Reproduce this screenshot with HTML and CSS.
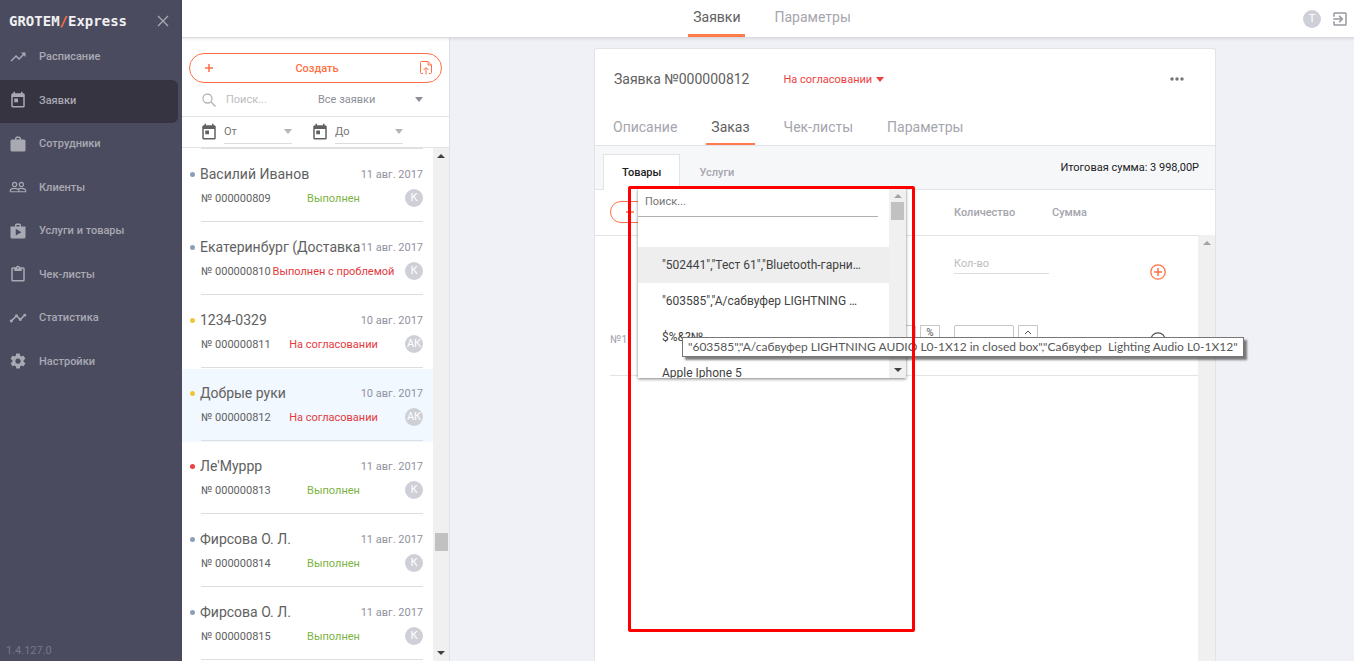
FILE: index.html
```html
<!DOCTYPE html>
<html lang="ru">
<head>
    <meta charset="UTF-8">
    <meta name="viewport" content="width=device-width, initial-scale=1.0">
    <title>GROTEM/Express</title>
    <link rel="stylesheet" href="styles.css">
</head>
<body>

    <aside class="sidebar">
        <div class="brand">
            <a href="#" class="logo">GROTEM<span>/</span>Express</a>
            <button class="close" aria-label="Закрыть меню">
                <svg width="12" height="12" viewBox="0 0 12 12"><path d="M1 1l10 10M11 1L1 11" stroke="currentColor" stroke-width="1.3"/></svg>
            </button>
        </div>
        <nav class="menu">
            <a href="#">
                <svg class="icon" viewBox="0 0 24 24"><path d="M16 6l2.3 2.3-4.9 4.9-4-4L2 16.600l1.400 1.400 6-6 4 4 6.300-6.300L22 12V6z"/></svg>
                Расписание
            </a>
            <a href="#" class="active">
                <svg class="icon" viewBox="0 0 24 24"><path d="M19 3h-1V1h-2v2H8V1H6v2H5a2 2 0 0 0-2 2v15c0 1.100.9 2 2 2h14a2 2 0 0 0 2-2V5a2 2 0 0 0-2-2zm0 17H5V8h14v12zM7 10h5v5H7z"/></svg>
                Заявки
            </a>
            <a href="#">
                <svg class="icon" viewBox="0 0 24 24"><path d="M20 6h-4V4l-2-2h-4L8 4v2H4a2 2 0 0 0-2 2v12c0 1.100.9 2 2 2h16a2 2 0 0 0 2-2V8a2 2 0 0 0-2-2zm-6 0h-4V4h4z"/></svg>
                Сотрудники
            </a>
            <a href="#">
                <svg class="icon" viewBox="0 0 24 24"><path d="M16.500 13c-1.200 0-3.100.3-4.500 1-1.400-.7-3.300-1-4.500-1C5.300 13 1 14.100 1 16.200V19h22v-2.800c0-2.100-4.300-3.200-6.500-3.200zm-4 4.500h-10v-1.300c0-.5 2.600-1.700 5-1.700s5 1.200 5 1.700zm9 0H14v-1.300c0-.5-.2-.9-.6-1.200.9-.3 2-.5 3.100-.5 2.400 0 5 1.200 5 1.700zM7.500 12a3.500 3.500 0 1 0 0-7 3.500 3.500 0 0 0 0 7zm0-5.500a2 2 0 1 1 0 4 2 2 0 0 1 0-4zm9 5.500a3.500 3.500 0 1 0 0-7 3.500 3.500 0 0 0 0 7zm0-5.500a2 2 0 1 1 0 4 2 2 0 0 1 0-4z"/></svg>
                Клиенты
            </a>
            <a href="#">
                <svg class="icon" viewBox="0 0 24 24"><path d="M16 6V4a2 2 0 0 0-2-2h-4a2 2 0 0 0-2 2v2H2v14c0 1.100.9 2 2 2h16a2 2 0 0 0 2-2V6zm-6-2h4v2h-4zM9 18V9l7.500 4.500z"/></svg>
                Услуги и товары
            </a>
            <a href="#">
                <svg class="icon" viewBox="0 0 24 24"><path d="M19 3h-4.200a3 3 0 0 0-5.600 0H5a2 2 0 0 0-2 2v15c0 1.100.9 2 2 2h14a2 2 0 0 0 2-2V5a2 2 0 0 0-2-2zm-7 0a1 1 0 1 1 0 2 1 1 0 0 1 0-2zm7 17H5V5h2v3h10V5h2z"/></svg>
                Чек-листы
            </a>
            <a href="#">
                <svg class="icon" viewBox="0 0 24 24"><path d="M23 8a2 2 0 0 1-2.500 1.900L17 13.500a2 2 0 1 1-3.900 0L10.500 11a2 2 0 0 1-1 0L5 15.500A2 2 0 1 1 3.500 14L8 9.500a2 2 0 1 1 3.900 0l2.600 2.600a2 2 0 0 1 1 0L19 8.500A2 2 0 1 1 23 8z"/></svg>
                Статистика
            </a>
            <a href="#">
                <svg class="icon" viewBox="0 0 24 24"><path d="M19.400 13a7.800 7.800 0 0 0 0-2l2.100-1.600c.2-.2.2-.4.100-.7l-2-3.400c-.1-.2-.4-.3-.6-.2l-2.500 1a7.300 7.300 0 0 0-1.700-1l-.4-2.600A.5.5 0 0 0 14 2h-4c-.3 0-.5.200-.5.400l-.4 2.700c-.6.200-1.200.6-1.700 1l-2.500-1c-.2-.1-.5 0-.6.200l-2 3.400c-.1.200-.1.500.1.700L4.600 11a7.800 7.800 0 0 0 0 2l-2.100 1.600c-.2.200-.2.400-.1.700l2 3.400c.1.200.4.300.6.200l2.500-1c.5.400 1.100.7 1.700 1l.4 2.700c0 .2.200.4.400.4h4c.3 0 .5-.2.500-.4l.4-2.700c.6-.2 1.200-.6 1.700-1l2.500 1c.2.100.5 0 .6-.2l2-3.400c.1-.2.100-.5-.1-.7zM12 15.500a3.500 3.500 0 1 1 0-7 3.500 3.500 0 0 1 0 7z"/></svg>
                Настройки
            </a>
        </nav>
        <div class="version">1.4.127.0</div>
    </aside>

    <div class="app">
        <header class="topbar">
            <nav class="top-tabs">
                <a href="#" class="active">Заявки</a>
                <a href="#">Параметры</a>
            </nav>
            <div class="user">
                <span class="avatar">T</span>
                <button class="logout" aria-label="Выход">
                    <svg width="18" height="18" viewBox="0 0 24 24"><path d="M10.100 15.600L11.500 17l5-5-5-5-1.400 1.400L12.700 11H3v2h9.700zM19 3H5a2 2 0 0 0-2 2v4h2V5h14v14H5v-4H3v4c0 1.100.9 2 2 2h14a2 2 0 0 0 2-2V5a2 2 0 0 0-2-2z" fill="currentColor"/></svg>
                </button>
            </div>
        </header>

        <div class="content">
            <section class="orders-panel">
                <button class="create">
                    <svg width="10" height="10" viewBox="0 0 10 10"><path d="M5 1v8M1 5h8" stroke="currentColor" stroke-width="1.500"/></svg>
                    <span>Создать</span>
                    <svg width="12" height="14" viewBox="0 0 12 14"><path d="M3 12.500H1.500q-1 0-1-1v-10q0-1 1-1H8L11.500 4v7.500q0 1-1 1H9M8 .5V4h3.500M6 13.500V7M3.500 9L6 6.500 8.500 9" fill="none" stroke="currentColor"/></svg>
                </button>
                <div class="search-row">
                    <svg width="14" height="14" viewBox="0 0 14 14"><circle cx="5.500" cy="5.500" r="4.500" fill="none" stroke="currentColor" stroke-width="1.300"/><path d="M9 9l4.500 4.500" stroke="currentColor" stroke-width="1.500"/></svg>
                    <input type="text" placeholder="Поиск..." aria-label="Поиск заявок">
                    <label class="select">
                        <select aria-label="Фильтр заявок">
                            <option>Все заявки</option>
                        </select>
                        <i class="caret"></i>
                    </label>
                </div>
                <div class="date-row">
                    <svg class="icon" viewBox="0 0 24 24"><path d="M19 3h-1V1h-2v2H8V1H6v2H5a2 2 0 0 0-2 2v15c0 1.100.9 2 2 2h14a2 2 0 0 0 2-2V5a2 2 0 0 0-2-2zm0 17H5V8h14v12zM7 10h5v5H7z"/></svg>
                    <label class="date"><input type="text" placeholder="От" aria-label="Дата от"><i class="caret"></i></label>
                    <svg class="icon" viewBox="0 0 24 24"><path d="M19 3h-1V1h-2v2H8V1H6v2H5a2 2 0 0 0-2 2v15c0 1.100.9 2 2 2h14a2 2 0 0 0 2-2V5a2 2 0 0 0-2-2zm0 17H5V8h14v12zM7 10h5v5H7z"/></svg>
                    <label class="date"><input type="text" placeholder="До" aria-label="Дата до"><i class="caret"></i></label>
                </div>
                <div class="orders-scroll">
                    <ul class="orders">
                        <li>
                            <div class="order">
                                <div class="line"><b class="dot blue"></b><h3>Василий Иванов</h3><time>11 авг. 2017</time></div>
                                <div class="info"><span>№ 000000809</span><span class="status done">Выполнен</span><span class="avatar">К</span></div>
                            </div>
                        </li>
                        <li>
                            <div class="order">
                                <div class="line"><b class="dot blue"></b><h3>Екатеринбург (Доставка</h3><time>11 авг. 2017</time></div>
                                <div class="info"><span>№ 000000810</span><span class="status problem">Выполнен с проблемой</span><span class="avatar">К</span></div>
                            </div>
                        </li>
                        <li>
                            <div class="order">
                                <div class="line"><b class="dot yellow"></b><h3>1234-0329</h3><time>10 авг. 2017</time></div>
                                <div class="info"><span>№ 000000811</span><span class="status problem">На согласовании</span><span class="avatar">АК</span></div>
                            </div>
                        </li>
                        <li class="selected">
                            <div class="order">
                                <div class="line"><b class="dot yellow"></b><h3>Добрые руки</h3><time>10 авг. 2017</time></div>
                                <div class="info"><span>№ 000000812</span><span class="status problem">На согласовании</span><span class="avatar">АК</span></div>
                            </div>
                        </li>
                        <li>
                            <div class="order">
                                <div class="line"><b class="dot red"></b><h3>Ле'Муррр</h3><time>11 авг. 2017</time></div>
                                <div class="info"><span>№ 000000813</span><span class="status done">Выполнен</span><span class="avatar">К</span></div>
                            </div>
                        </li>
                        <li>
                            <div class="order">
                                <div class="line"><b class="dot blue"></b><h3>Фирсова О. Л.</h3><time>11 авг. 2017</time></div>
                                <div class="info"><span>№ 000000814</span><span class="status done">Выполнен</span><span class="avatar">К</span></div>
                            </div>
                        </li>
                        <li>
                            <div class="order">
                                <div class="line"><b class="dot blue"></b><h3>Фирсова О. Л.</h3><time>11 авг. 2017</time></div>
                                <div class="info"><span>№ 000000815</span><span class="status done">Выполнен</span><span class="avatar">К</span></div>
                            </div>
                        </li>
                    </ul>
                    <div class="scrollbar">
                        <i class="arrow up"></i>
                        <div class="track low"><div class="thumb"></div></div>
                        <i class="arrow down"></i>
                    </div>
                </div>
            </section>

            <main class="workspace">
                <article class="card">
                    <div class="card-head">
                        <h1>Заявка №000000812</h1>
                        <button class="state">На согласовании <i class="caret"></i></button>
                        <button class="more" aria-label="Ещё">
                            <svg width="14" height="4" viewBox="0 0 14 4"><circle cx="2" cy="2" r="1.700"/><circle cx="7" cy="2" r="1.700"/><circle cx="12" cy="2" r="1.700"/></svg>
                        </button>
                    </div>
                    <nav class="tabs">
                        <a href="#">Описание</a>
                        <a href="#" class="active">Заказ</a>
                        <a href="#">Чек-листы</a>
                        <a href="#">Параметры</a>
                    </nav>
                    <div class="subtabs">
                        <a href="#" class="active">Товары</a>
                        <a href="#">Услуги</a>
                        <p class="total">Итоговая сумма: 3 998,00Р</p>
                    </div>
                    <div class="goods-wrap">
                        <table class="goods">
                            <colgroup>
                                <col class="c-gutter"><col><col class="c-price"><col class="c-qty"><col class="c-sum"><col class="c-action">
                            </colgroup>
                            <thead>
                                <tr>
                                    <th></th>
                                    <th><button class="add" aria-label="Добавить товар"><svg width="10" height="10" viewBox="0 0 10 10"><path d="M5 1v8M1 5h8" stroke="currentColor" stroke-width="1.500"/></svg></button></th>
                                    <th></th>
                                    <th>Количество</th>
                                    <th>Сумма</th>
                                    <th></th>
                                </tr>
                            </thead>
                            <tbody>
                                <tr class="new-row">
                                    <td></td>
                                    <td></td>
                                    <td></td>
                                    <td><input class="qty-new" type="text" placeholder="Кол-во" aria-label="Количество"></td>
                                    <td></td>
                                    <td><button class="round plus" aria-label="Добавить"><svg width="16" height="16" viewBox="0 0 16 16"><path d="M8 4v8M4 8h8" stroke="currentColor" stroke-width="1.500"/><circle cx="8" cy="8" r="7.200" fill="none" stroke="currentColor" stroke-width="1.300"/></svg></button></td>
                                </tr>
                                <tr>
                                    <td></td>
                                    <td>№1</td>
                                    <td>
                                        <div class="spin right">
                                            <input type="text" aria-label="Скидка">
                                            <div class="steps"><button>%</button><button aria-label="Рубли"></button></div>
                                        </div>
                                    </td>
                                    <td>
                                        <div class="spin">
                                            <input type="text" aria-label="Количество товара">
                                            <div class="steps">
                                                <button aria-label="Больше"><svg width="6" height="4" viewBox="0 0 6 4"><path d="M0 4l3-3 3 3" fill="none" stroke="currentColor"/></svg></button>
                                                <button aria-label="Меньше"><svg width="6" height="4" viewBox="0 0 6 4"><path d="M0 0l3 3 3-3" fill="none" stroke="currentColor"/></svg></button>
                                            </div>
                                        </div>
                                    </td>
                                    <td></td>
                                    <td><button class="round" aria-label="Удалить"><svg width="16" height="16" viewBox="0 0 16 16"><path d="M4 8h8" stroke="currentColor" stroke-width="1.500"/><circle cx="8" cy="8" r="7.200" fill="none" stroke="currentColor" stroke-width="1.300"/></svg></button></td>
                                </tr>
                            </tbody>
                        </table>
                        <div class="scrollbar disabled"><i class="arrow up"></i></div>
                    </div>

                    <!-- выпадающий список товаров -->
                    <div class="dropdown">
                        <div class="dropdown-body">
                            <input type="text" placeholder="Поиск..." aria-label="Поиск товара">
                            <ul>
                                <li class="hover">"502441","Тест 61","Bluetooth-гарнитура"</li>
                                <li>"603585","А/сабвуфер LIGHTNING AUDIO L0-1X12 in closed box"</li>
                                <li>$%&amp;?№</li>
                                <li>Apple Iphone 5</li>
                            </ul>
                        </div>
                        <div class="scrollbar">
                            <i class="arrow up muted"></i>
                            <div class="track"><div class="thumb"></div></div>
                            <i class="arrow down"></i>
                        </div>
                    </div>
                    <div class="tooltip" role="tooltip">"603585","А/сабвуфер LIGHTNING AUDIO L0-1X12 in closed box","Сабвуфер&nbsp; Lighting Audio L0-1X12"</div>
                    <div class="highlight"></div>
                </article>
            </main>
        </div>
    </div>

</body>
</html>
```
FILE: styles.css
```css
* {
    box-sizing: border-box;
}
body {
    margin: 0;
    height: 100vh;
    display: flex;
    overflow: hidden;
    font-family: Roboto, 'Liberation Sans', sans-serif;
    font-size: 11px;
    color: #616161;
    background-color: #fff;
}
a {
    color: inherit;
    text-decoration: none;
}
h1, h3, p, ul {
    margin: 0;
    padding: 0;
    font-weight: normal;
}
ul {
    list-style: none;
}
button, input, select {
    font: inherit;
    color: inherit;
    background: none;
    border: 0;
    padding: 0;
    margin: 0;
    min-width: 0;
    outline: none;
}
button {
    display: flex;
    align-items: center;
    justify-content: center;
    cursor: pointer;
}
svg {
    display: block;
    flex: none;
}
.icon {
    width: 18px;
    height: 18px;
    fill: currentColor;
}
.caret {
    flex: none;
    border: 4px solid transparent;
    border-top: 5px solid currentColor;
    border-bottom: 0;
}
.avatar {
    width: 18px;
    height: 18px;
    border-radius: 50%;
    background-color: #cfcfd8;
    color: #fff;
    font-size: 11px;
    line-height: 18px;
    text-align: center;
}

/* Боковое меню */
.sidebar {
    flex: none;
    width: 182px;
    display: flex;
    flex-direction: column;
    background-color: #4b4b5f;
    color: #a9a9b3;
}
.brand {
    height: 36px;
    padding: 6px 13px 0 9px;
    display: flex;
    align-items: center;
    justify-content: space-between;
}
.logo {
    font-family: 'DejaVu Sans Mono', monospace;
    font-size: 14px;
    font-weight: bold;
    color: #f0f0f2;
}
.logo span {
    color: #ff7043;
}
.menu {
    height: 348px;
    display: flex;
    flex-direction: column;
}
.menu a {
    flex: 1;
    margin-right: 4px;
    padding: 0 9px 2px;
    display: flex;
    align-items: center;
    gap: 12px;
    font-weight: 500;
    border-radius: 0 6px 6px 0;
}
.menu .active {
    background-color: #353440;
}
.version {
    margin-top: auto;
    padding: 4px 6px;
    color: #77778a;
}

/* Верхняя панель */
.app {
    flex: 1;
    min-width: 0;
    display: flex;
    flex-direction: column;
}
.topbar {
    position: relative;
    height: 38px;
    padding-left: 8px;
    display: flex;
    justify-content: center;
    border-bottom: 1px solid #dcdcdf;
    box-shadow: 0 1px 3px rgba(0, 0, 0, 0.1);
}
.top-tabs {
    display: flex;
    gap: 24px;
    font-size: 14px;
    color: #a5a5ad;
}
.top-tabs a {
    padding: 0 5px;
    line-height: 34px;
    border-bottom: 3px solid transparent;
}
.top-tabs .active, .tabs .active {
    color: #616161;
    border-color: #ff7c4a;
}
.user {
    position: absolute;
    top: 10px;
    right: 5px;
    display: flex;
    gap: 10px;
}
.logout {
    color: #96969e;
}
.content {
    flex: 1;
    min-height: 0;
    display: flex;
}

/* Список заявок */
.orders-panel {
    flex: none;
    width: 268px;
    display: flex;
    flex-direction: column;
    border-right: 1px solid #e0e0e4;
}
.create {
    height: 30px;
    margin: 15px 7px 0;
    padding: 0 9px 0 14px;
    justify-content: space-between;
    border: 1px solid #ff7043;
    border-radius: 15px;
    color: #ff7043;
    font-weight: 500;
}
.search-row {
    height: 34px;
    padding: 0 26px 0 20px;
    display: flex;
    align-items: center;
    border-bottom: 1px solid #e2e2e4;
    color: #b5b5b8;
}
.search-row input {
    flex: 1;
    margin-left: 10px;
}
input::placeholder {
    color: #bdbdbd;
    opacity: 1;
}
.select {
    width: 105px;
    display: flex;
    align-items: center;
    color: #8e8e98;
}
.select select {
    flex: 1;
    appearance: none;
}
.date-row {
    height: 31px;
    padding: 0 46px 3px 18px;
    display: flex;
    align-items: flex-end;
    gap: 6px;
    border-bottom: 1px solid #e2e2e4;
}
.date-row .icon {
    margin-bottom: 3px;
}
.date {
    flex: 1;
    height: 24px;
    margin-right: 13px;
    display: flex;
    align-items: center;
    color: #b5b5b8;
    border-bottom: 1px solid #dcdcdc;
}
.date:last-child {
    margin-right: 0;
}
.date input {
    width: 100%;
}
.date input::placeholder {
    color: #757575;
}
.orders-scroll {
    flex: 1;
    min-height: 0;
    display: flex;
}
.orders-scroll .scrollbar {
    width: 16px;
}
.orders {
    flex: 1;
    min-width: 0;
    overflow: hidden;
}
.orders::before {
    content: '';
    display: block;
    height: 1px;
    margin: 0 10px 1px 19px;
    background-color: #dedee0;
}
.orders li {
    height: 73px;
    padding: 0 10px 1px 8px;
}
.orders .selected {
    background-color: #f1f8ff;
}
.order {
    height: 72px;
    padding: 14px 0 0 11px;
}
.order::after {
    content: '';
    display: block;
    height: 1px;
    margin-top: 12px;
    background-color: #dedee0;
}
.line {
    height: 20px;
    display: flex;
    align-items: center;
    white-space: nowrap;
}
.line h3 {
    flex: 1;
    min-width: 0;
    font-size: 14px;
}
.line time {
    color: #9292a0;
}
.dot {
    width: 5px;
    height: 5px;
    margin: 0 5px 0 -11px;
    border-radius: 50%;
}
.blue {
    background-color: #8aa0b8;
}
.yellow {
    background-color: #edc73b;
}
.red {
    background-color: #ee3f3f;
}
.info {
    height: 22px;
    margin-top: 3px;
    display: grid;
    grid-template-columns: 71px minmax(0, 1fr) 28px;
    align-items: center;
    white-space: nowrap;
}
.info .avatar {
    justify-self: end;
}
.status {
    text-align: center;
}
.done {
    color: #7cb342;
}
.problem {
    color: #e53940;
}

/* Полосы прокрутки */
.scrollbar {
    flex: none;
    width: 17px;
    padding: 6px 2px;
    display: flex;
    flex-direction: column;
    align-items: center;
    background-color: #f0f0f0;
}
.track {
    flex: 1;
    width: 13px;
    padding-top: 4px;
}
.thumb {
    height: 18px;
    background-color: #c1c1c1;
}
.low {
    display: flex;
    flex-direction: column;
    justify-content: flex-end;
    padding-bottom: 100px;
}
.arrow {
    border: 4px solid transparent;
}
.up {
    border-top: 0;
    border-bottom-color: #404040;
}
.down {
    border-bottom: 0;
    border-top-color: #404040;
}
.muted, .disabled .up {
    border-bottom-color: #a3a3a3;
}

/* Карточка заявки */
.workspace {
    flex: 1;
    min-width: 0;
    padding: 10px 8px 0 14px;
    display: flex;
    justify-content: center;
    background-color: #f0f1f6;
}
.card {
    position: relative;
    flex: 1;
    max-width: 622px;
    display: flex;
    flex-direction: column;
    background-color: #fff;
    border: 1px solid #e2e3e6;
    border-bottom: 0;
    border-radius: 3px 3px 0 0;
}
.card-head {
    height: 60px;
    padding: 0 31px 0 19px;
    display: flex;
    align-items: center;
}
.card-head h1 {
    font-size: 14px;
}
.state {
    margin-left: 34px;
    gap: 4px;
    color: #ee3f3f;
}
.more {
    margin-left: auto;
    fill: #757575;
}
.tabs {
    padding-left: 13px;
    display: flex;
    gap: 24px;
    font-size: 14px;
    color: #a5a5ad;
    border-bottom: 1px solid #e2e3e6;
}
.tabs a {
    height: 36px;
    padding: 0 5px;
    line-height: 36px;
    border-bottom: 2px solid transparent;
}
.subtabs {
    height: 44px;
    padding: 0 16px 0 8px;
    display: flex;
    align-items: flex-end;
    background-color: #f6f7f9;
    border-bottom: 1px solid #e2e3e6;
    font-weight: 500;
    color: #a5a5ad;
}
.subtabs a {
    height: 36px;
    padding: 0 18px;
    line-height: 36px;
    border: 1px solid transparent;
    border-bottom: 0;
    margin-bottom: -1px;
}
.subtabs .active {
    color: #212121;
    background-color: #fff;
    border-color: #e2e3e6;
}
.total {
    margin-left: auto;
    align-self: center;
    font-weight: normal;
    color: #212121;
}
.goods-wrap {
    flex: 1;
    display: flex;
    align-items: flex-start;
}
.goods {
    flex: 1;
    width: 100%;
    table-layout: fixed;
    border-collapse: collapse;
    color: #a5a5ad;
}
.c-gutter {
    width: 15px;
}
.c-price {
    width: 120px;
}
.c-qty, .c-sum {
    width: 98px;
}
.c-action {
    width: 48px;
}
.goods th, .goods td {
    padding: 0;
    text-align: left;
    font-weight: 500;
}
.goods th {
    height: 45px;
    border-bottom: 1px solid #e2e3e6;
}
.goods td {
    height: 70px;
    font-weight: normal;
}
.goods .new-row td {
    padding-top: 4px;
}
.goods tr:last-child td + td {
    border-bottom: 1px solid #e2e3e6;
}
.goods-wrap .scrollbar {
    align-self: stretch;
    margin-top: 45px;
}
.add {
    width: 130px;
    height: 22px;
    padding-left: 14px;
    justify-content: flex-start;
    border: 1px solid #ff7043;
    border-radius: 11px;
    color: #ff7043;
}
.qty-new {
    display: block;
    width: 95px;
    height: 20px;
    margin-bottom: 16px;
    border-bottom: 1px solid #dcdcdc;
}
.round {
    color: #555;
}
.plus {
    color: #ff7043;
}
.spin {
    height: 30px;
    display: flex;
    gap: 4px;
    color: #555;
}
.right {
    justify-content: flex-end;
    margin-right: 14px;
}
.spin input {
    width: 60px;
    border: 1px solid #c8c8cc;
    border-radius: 2px;
}
.steps {
    width: 20px;
}
.steps button {
    width: 20px;
    height: 15px;
    border: 1px solid #c8c8cc;
    font-size: 10px;
}

/* Выпадающий список */
.dropdown {
    position: absolute;
    top: 139px;
    left: 43px;
    width: 268px;
    height: 190px;
    display: flex;
    background-color: #fff;
    box-shadow: 0 1px 3px rgba(0, 0, 0, 0.5);
}
.dropdown-body {
    flex: 1;
    min-width: 0;
    overflow: hidden;
}
.dropdown input {
    display: block;
    width: 240px;
    height: 29px;
    padding: 0 7px 2px;
    border-bottom: 1px solid #b0b0b0;
}
.dropdown input::placeholder {
    color: #757575;
}
.dropdown ul {
    margin-top: 30px;
}
.dropdown li {
    height: 36px;
    padding: 0 27px 0 24px;
    font-size: 12px;
    line-height: 36px;
    color: #424242;
    white-space: nowrap;
    overflow: hidden;
    text-overflow: ellipsis;
}
.dropdown .hover {
    background-color: #eee;
}
.tooltip {
    position: absolute;
    top: 288px;
    left: 87px;
    padding: 0 5px;
    border: 1px solid #767676;
    background-color: #fff;
    box-shadow: 3px 3px 2px rgba(0, 0, 0, 0.5);
    font-family: Lato, 'Open Sans', sans-serif;
    font-size: 12px;
    line-height: 18px;
    color: #575757;
    white-space: nowrap;
}
.highlight {
    position: absolute;
    top: 137px;
    left: 33px;
    width: 287px;
    height: 446px;
    border: 3px solid #f00;
    border-radius: 2px;
    pointer-events: none;
}
```
